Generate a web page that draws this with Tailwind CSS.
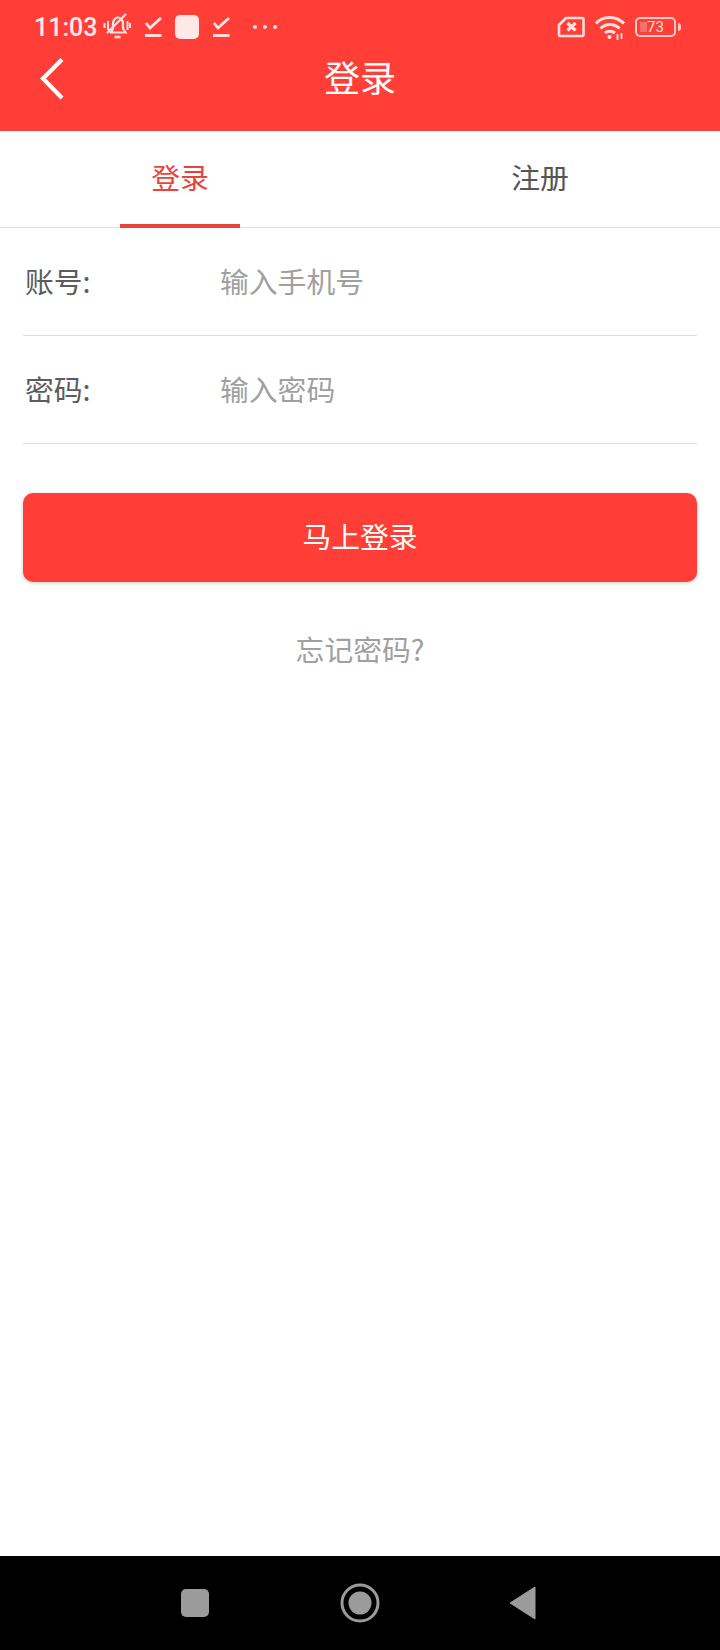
<!DOCTYPE html>
<html lang="zh">
<head>
  <meta charset="UTF-8" />
  <title>登录</title>
  <script src="https://cdn.jsdelivr.net/npm/@tailwindcss/browser@4"></script>
</head>
<body class="bg-white font-['Noto_Sans_CJK_SC','Noto_Sans',sans-serif]">
  <div class="w-[720px] h-[1650px] flex flex-col overflow-hidden">
    <!-- Status bar + title -->
    <header class="relative h-[131px] shrink-0 bg-[#ff3f37] border-b border-[#e8443c] text-white">
      <div class="h-[54px] flex items-center pl-[34px] text-white/90">
        <span class="font-['Roboto'] font-medium text-[25px] leading-none mt-[1px] w-[62px]">11:03</span>
        <svg class="ml-[7px]" width="28" height="28" viewBox="0 0 28 28" fill="none" stroke="#ffe0de" stroke-width="2.2">
          <path d="M8 19.5h14.5l-2.5-4v-5c0-3.500-2.500-6-5-6s-5 2.500-5 6v5z" />
          <path d="M11.500 24h6" stroke-width="2.600" />
          <path d="M4 20L23 1" />
          <path d="M5 8v9M1.500 10v5M24.500 8v9M27 10v5" stroke-width="2" />
        </svg>
        <svg class="ml-[13px]" width="18" height="24" viewBox="0 0 18 24" fill="none" stroke="#ffe6e4" stroke-width="2.800">
          <path d="M2 8l4 5 11-10" />
          <path d="M1 20.500h16.500" />
        </svg>
        <div class="ml-[13px] w-[24px] h-[24px] rounded-[5px] bg-[#ffe8e6]"></div>
        <svg class="ml-[13px]" width="18" height="24" viewBox="0 0 18 24" fill="none" stroke="#ffe6e4" stroke-width="2.800">
          <path d="M2 8l4 5 11-10" />
          <path d="M1 20.500h16.500" />
        </svg>
        <div class="ml-[23px] flex gap-[6px]">
          <i class="block w-[4px] h-[4px] rounded-full bg-[#ffe6e4]"></i>
          <i class="block w-[4px] h-[4px] rounded-full bg-[#ffe6e4]"></i>
          <i class="block w-[4px] h-[4px] rounded-full bg-[#ffe6e4]"></i>
        </div>
        <div class="ml-auto flex items-center pr-[39px]">
          <svg width="28" height="22" viewBox="0 0 28 22" fill="none" stroke="#ffe0de" stroke-width="2.600">
            <path d="M9 2h16.500a1 1 0 0 1 1 1v16a1 1 0 0 1-1 1H3a1 1 0 0 1-1-1V9z" stroke-linejoin="round" />
            <path d="M10.500 7l8 7.500M18.500 7l-8 7.500" stroke-width="3.200" />
          </svg>
          <svg class="ml-[9px]" width="32" height="26" viewBox="0 0 32 26" fill="none" stroke="#ffe0de" stroke-width="3">
            <path d="M2 9.500c7-8 20-8 28 0" />
            <path d="M6.500 14.500c5-5.500 14-5.500 19 0" />
            <path d="M11 19c2.500-2.500 7-2.500 10 0" />
            <circle cx="15.500" cy="23" r="2" fill="#ffe0de" stroke="none" />
            <path d="M23.500 20v6M27.500 19v6" stroke-width="1.800" />
          </svg>
          <div class="ml-[9px] relative w-[41px] h-[20px] rounded-[5px] border-2 border-[#ffc9c6] flex items-center justify-center">
            <div class="absolute left-[3px] top-[3px] bottom-[3px] w-[7px] bg-white/25"></div>
            <span class="font-['Roboto'] text-[15px] leading-none text-[#ffe0de]">73</span>
          </div>
          <div class="ml-[2px] w-[3px] h-[8px] rounded-r-sm bg-[#ffc9c6]"></div>
        </div>
      </div>
      <svg class="absolute left-[40px] top-[58px]" width="24" height="42" viewBox="0 0 24 42" fill="none" stroke="white" stroke-width="4.200">
        <path d="M22 1.500L3 20.500 22 40" />
      </svg>
      <div class="absolute inset-x-0 top-[52px] text-center text-[36px] leading-[48px]">登录</div>
    </header>

    <!-- Tabs -->
    <nav class="h-[97px] shrink-0 flex border-b border-[#dddddd] text-[28.8px]">
      <div class="relative w-[360px] flex items-center justify-center text-[#e8443c] pb-[5px]">
        登录
        <div class="absolute -bottom-[1px] left-[120px] w-[120px] h-[4px] bg-[#e8443c]"></div>
      </div>
      <div class="w-[360px] flex items-center justify-center text-[#555555] pb-[5px]">注册</div>
    </nav>

    <!-- Form -->
    <main class="px-[23px] text-[28.8px] flex-1">
      <div class="h-[108px] flex items-center border-b border-[#dddddd] pl-[2px] pb-[2px]">
        <span class="w-[196px] text-[#5c5c5c]">账号:</span>
        <span class="text-[#a0a0a0] -ml-[1px]">输入手机号</span>
      </div>
      <div class="h-[108px] flex items-center border-b border-[#dddddd] pl-[2px] pb-[2px]">
        <span class="w-[196px] text-[#5c5c5c]">密码:</span>
        <span class="text-[#a0a0a0] -ml-[1px]">输入密码</span>
      </div>
      <button class="mt-[49px] w-full h-[89px] rounded-[10px] bg-[#ff3f37] text-white pb-[3px] shadow-[0_1px_4px_rgba(0,0,0,0.2)]">马上登录</button>
      <p class="mt-[43px] text-center text-[#a0a0a0] leading-[48px]">忘记密码?</p>
    </main>

    <!-- Android nav bar -->
    <footer class="h-[94px] shrink-0 bg-black flex items-center">
      <div class="ml-[181px] w-[28px] h-[28px] rounded-[5px] bg-[#9b9b9b]"></div>
      <svg class="ml-[131px]" width="40" height="40" viewBox="0 0 40 40">
        <circle cx="20" cy="20" r="18" fill="none" stroke="#9b9b9b" stroke-width="3" />
        <circle cx="20" cy="20" r="11.500" fill="#9b9b9b" />
      </svg>
      <svg class="ml-[129px]" width="28" height="34" viewBox="0 0 28 34">
        <path d="M26 1v32L1 17z" fill="#9b9b9b" stroke="#9b9b9b" stroke-width="1" stroke-linejoin="round" />
      </svg>
    </footer>
  </div>
</body>
</html>
